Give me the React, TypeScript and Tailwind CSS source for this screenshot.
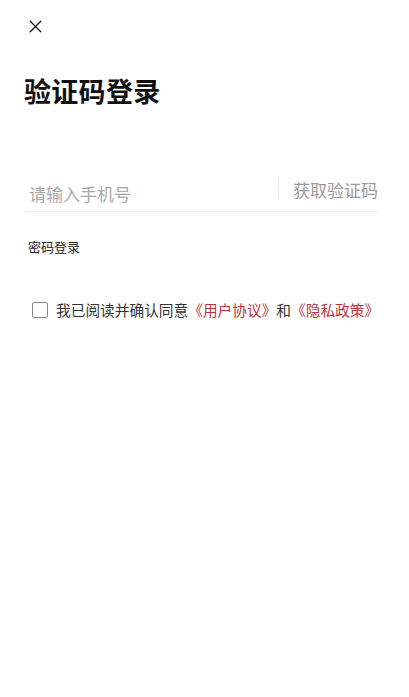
import { X } from 'lucide-react';

const font = { fontFamily: '"Noto Sans CJK SC", "Noto Sans", sans-serif' };

export default function App() {
    return (
        <div className="w-[409px] h-[697px] bg-white overflow-hidden" style={font}>
            {/* Close */}
            <div className="pt-[16px] pl-[25px]">
                <X size={21} strokeWidth={1.5} className="text-[#111]" />
            </div>

            {/* Title */}
            <h1 className="mt-[36px] ml-[24px] text-[27px] leading-[36px] font-bold text-[#111] tracking-[0.3px]">
                验证码登录
            </h1>

            {/* Phone input */}
            <div className="mt-[63px] ml-[25px] mr-[31px] flex items-center h-[40px] border-b border-[#ececec]">
                <span className="flex-1 pl-[4px] pt-[4px] text-[17px] text-[#a8a8a8]">请输入手机号</span>
                <div className="w-px h-[22px] bg-[#eaeaea] mb-[8px]"></div>
                <span className="pl-[14px] pb-[4px] text-[17px] text-[#9a9a9a]">获取验证码</span>
            </div>

            {/* Password login */}
            <div className="mt-[26px] ml-[28px] text-[13px] leading-[18px] text-[#222]">密码登录</div>

            {/* Agreement */}
            <div className="mt-[44px] ml-[32px] flex items-center">
                <div className="w-[16px] h-[16px] border-[1.5px] border-[#8a8a8a] rounded-[2px]"></div>
                <span className="ml-[8px] text-[14.7px] leading-[20px] text-[#333]">
                    我已阅读并确认同意<span className="text-[#b8343d]">《用户协议》</span>和<span className="text-[#b8343d]">《隐私政策》</span>
                </span>
            </div>
        </div>
    );
}
